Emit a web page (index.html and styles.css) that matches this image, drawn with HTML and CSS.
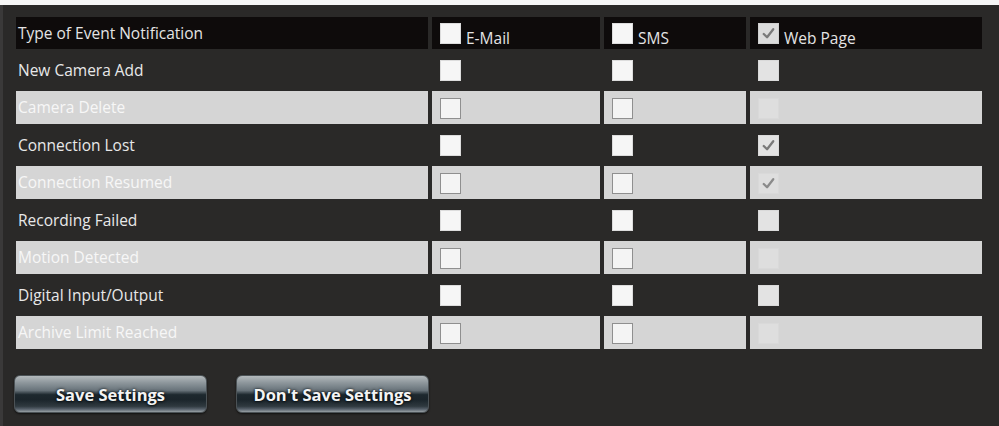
FILE: index.html
```html
<!DOCTYPE html>
<html>
<head>
<meta charset="utf-8">
<link rel="stylesheet" href="styles.css">
</head>
<body>
<div class="panel">
  <table class="grid">
    <colgroup>
      <col class="c-label"><col class="c-mail"><col class="c-sms"><col class="c-web">
    </colgroup>
    <thead>
      <tr class="head">
        <th class="label">Type of Event Notification</th>
        <th><span class="cb"></span><span class="htxt">E-Mail</span></th>
        <th><span class="cb"></span><span class="htxt">SMS</span></th>
        <th><span class="cb dis checked"><svg viewBox="0 0 20 20"><path d="M5 10.5 L8.5 14 L15 5.5"/></svg></span><span class="htxt">Web Page</span></th>
      </tr>
    </thead>
    <tbody>
      <tr class="dark">
        <td class="label">New Camera Add</td>
        <td><span class="cb"></span></td><td><span class="cb"></span></td><td><span class="cb dis"></span></td>
      </tr>
      <tr class="light">
        <td class="label">Camera Delete</td>
        <td><span class="cb"></span></td><td><span class="cb"></span></td><td><span class="cb dis"></span></td>
      </tr>
      <tr class="dark">
        <td class="label">Connection Lost</td>
        <td><span class="cb"></span></td><td><span class="cb"></span></td>
        <td><span class="cb dis checked"><svg viewBox="0 0 20 20"><path d="M5 10.5 L8.5 14 L15 5.5"/></svg></span></td>
      </tr>
      <tr class="light">
        <td class="label">Connection Resumed</td>
        <td><span class="cb"></span></td><td><span class="cb"></span></td>
        <td><span class="cb dis checked"><svg viewBox="0 0 20 20"><path d="M5 10.5 L8.5 14 L15 5.5"/></svg></span></td>
      </tr>
      <tr class="dark">
        <td class="label">Recording Failed</td>
        <td><span class="cb"></span></td><td><span class="cb"></span></td><td><span class="cb dis"></span></td>
      </tr>
      <tr class="light">
        <td class="label">Motion Detected</td>
        <td><span class="cb"></span></td><td><span class="cb"></span></td><td><span class="cb dis"></span></td>
      </tr>
      <tr class="dark">
        <td class="label">Digital Input/Output</td>
        <td><span class="cb"></span></td><td><span class="cb"></span></td><td><span class="cb dis"></span></td>
      </tr>
      <tr class="light">
        <td class="label">Archive Limit Reached</td>
        <td><span class="cb"></span></td><td><span class="cb"></span></td><td><span class="cb dis"></span></td>
      </tr>
    </tbody>
  </table>
  <div class="actions">
    <button class="btn">Save Settings</button>
    <button class="btn">Don't Save Settings</button>
  </div>
</div>
</body>
</html>
```

FILE: styles.css
```css
html, body {
  margin: 0;
  padding: 0;
  background: #f6f6f6;
}

.panel {
  margin-top: 5px;
  height: 421px;
  box-sizing: border-box;
  background: #2a2928;
  border-left: 3px solid #3a3939;
  padding: 8px 13px 0 9px;
  font-family: "Open Sans", "DejaVu Sans", sans-serif;
}

.grid {
  border-collapse: separate;
  border-spacing: 4px;
  table-layout: fixed;
  width: 974px;
}

.c-label { width: 412px; }
.c-mail { width: 168px; }
.c-sms { width: 142px; }
.c-web { width: 232px; }

th, td {
  padding: 0;
  text-align: left;
  vertical-align: middle;
  font-size: 15.5px;
  font-weight: normal;
  white-space: nowrap;
}

.label {
  padding-left: 2px;
}

td:not(.label), th:not(.label) {
  padding-left: 8px;
}

.head th {
  height: 32px;
  background: #0e0b0b;
  color: #e4e4e4;
}

.head .htxt {
  display: inline-block;
  vertical-align: bottom;
  margin-left: 5px;
  line-height: 16px;
  position: relative;
  top: 2px;
}

.head .cb {
  vertical-align: bottom;
}

tbody td {
  height: 33.5px;
}

.dark td {
  color: #e8e8e8;
}

.light td {
  background: #d5d5d5;
  color: #f7f7f7;
}

.cb {
  display: inline-block;
  width: 21px;
  height: 21px;
  box-sizing: border-box;
  background: #f6f6f6;
  border: 1px solid #dcdcdc;
  vertical-align: middle;
}

.light .cb {
  background: #f4f4f4;
  border-color: #8f8f8f;
}

.cb.dis {
  background: #e3e3e3;
  border-color: #d9d9d9;
}

.light .cb.dis {
  background: #dedede;
  border-color: #d9d9d9;
}

.head .cb.dis {
  background: #dcdcdc;
  border-color: #cfcfcf;
}

.cb svg {
  display: block;
  width: 19px;
  height: 19px;
}

.cb svg path {
  fill: none;
  stroke: #7a7a7a;
  stroke-width: 2.4;
  stroke-linecap: round;
  stroke-linejoin: round;
}

.light .cb svg path {
  stroke: #8a8a8a;
}

.actions {
  display: flex;
  gap: 29px;
  margin-top: 22px;
  padding-left: 2px;
}

.btn {
  width: 193px;
  height: 38px;
  border: 1px solid #4b5256;
  border-radius: 6px;
  background: linear-gradient(to bottom,
    #b3b9bc 0%,
    #8f989d 18%,
    #68737a 40%,
    #1d282e 52%,
    #1b252b 66%,
    #2f393f 84%,
    #56606a 92%,
    #98a0a4 100%);
  color: #f4f4f4;
  font-family: "Open Sans", "DejaVu Sans", sans-serif;
  font-weight: bold;
  font-size: 16.5px;
  text-shadow: 0 0 3px #0d1418, 0 1px 2px #0d1418;
  box-shadow: 0 1px 2px rgba(0,0,0,0.6);
  padding: 0;
  cursor: pointer;
}
```
